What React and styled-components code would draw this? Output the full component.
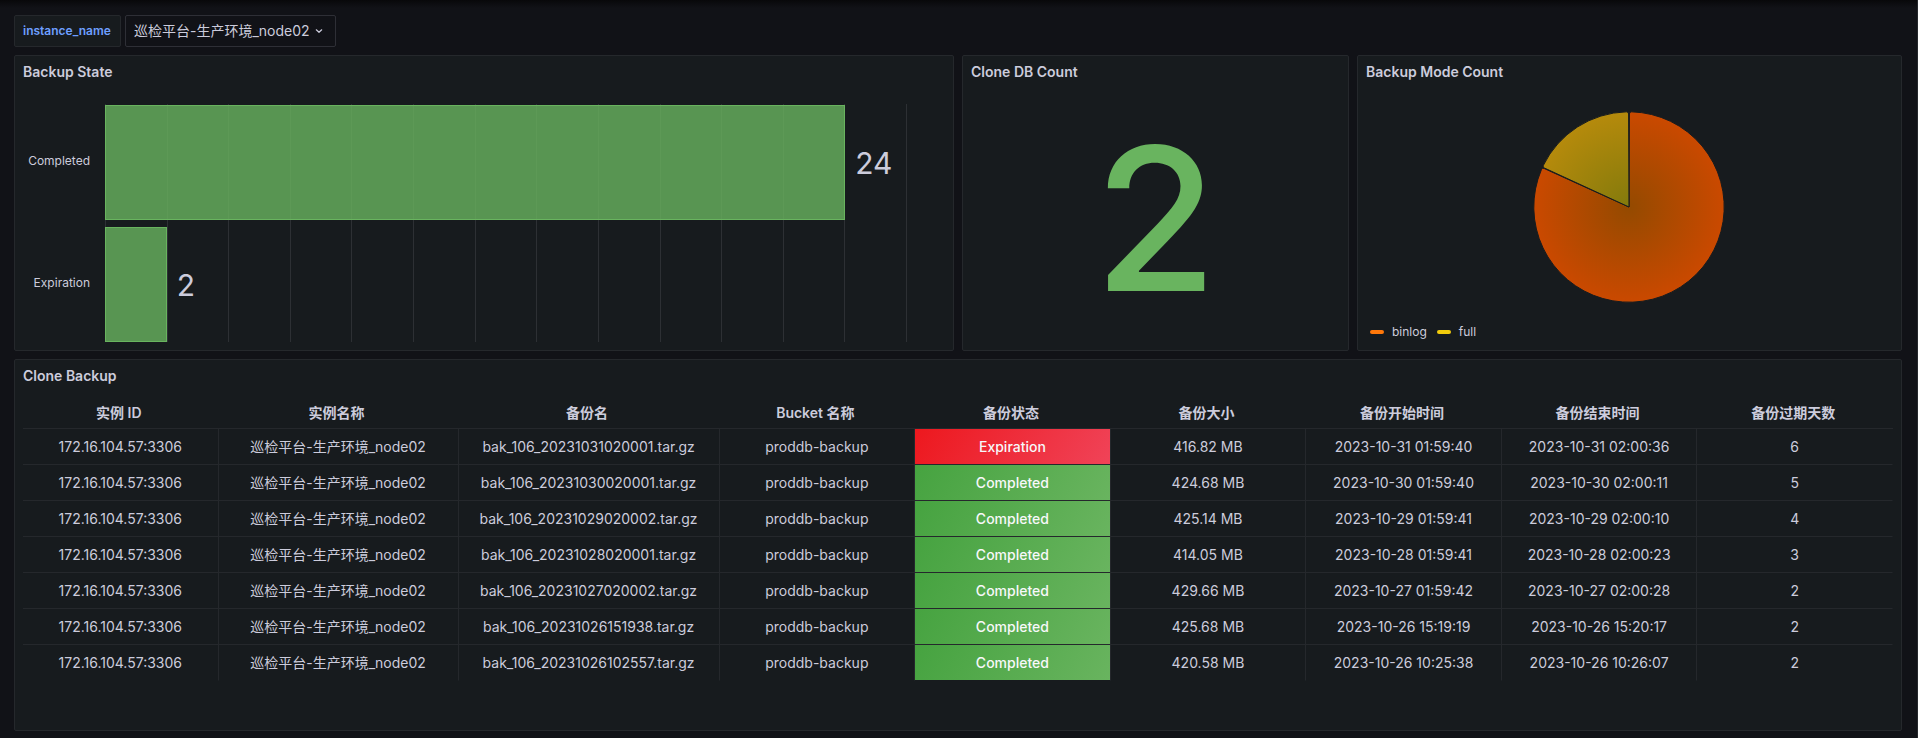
import React from 'react';
import styled, { createGlobalStyle } from 'styled-components';

const color = {
  page: '#111217',
  panel: '#171b1e',
  line: '#25282c',
  text: '#ccccdc',
  green: '#69b45f',
};

const GlobalStyle = createGlobalStyle`
  *, *::before, *::after { box-sizing: border-box; }
  body {
    margin: 0;
    background: ${color.page};
    color: ${color.text};
    font: 400 14px/22px Inter, "Noto Sans CJK SC", sans-serif;
    -webkit-font-smoothing: antialiased;
  }
`;

const Page = styled.main`
  min-height: 100vh;
  padding: 15px 15px 7px 14px;
  border-right: 1px solid ${color.line};
  background: linear-gradient(#08080a, ${color.page} 8px);
`;

const Toolbar = styled.form`
  display: flex;
  gap: 4px;
  margin-bottom: 8px;
`;

const VariableLabel = styled.label`
  display: flex;
  align-items: center;
  min-width: 107px;
  height: 32px;
  padding: 0 8px;
  border: 1px solid ${color.line};
  border-radius: 2px;
  background: ${color.panel};
  color: #6e9fff;
  font-size: 12px;
  font-weight: 600;
`;

const SelectBox = styled.div`
  display: grid;
  align-items: center;
  height: 32px;
  border: 1px solid #2e2f36;
  border-radius: 2px;

  > * { grid-area: 1 / 1; }

  svg {
    justify-self: end;
    margin-right: 8px;
    pointer-events: none;
  }
`;

const Select = styled.select`
  appearance: none;
  height: 30px;
  padding: 0 24px 0 8px;
  border: 0;
  background: transparent;
  color: inherit;
  font: inherit;
`;

const Dashboard = styled.div`
  display: grid;
  grid-template-columns: repeat(24, minmax(0, 1fr));
  grid-template-rows: 296px minmax(372px, auto);
  gap: 8px;
`;

const PanelFrame = styled.section`
  grid-column: span ${(p) => p.$span};
  display: flex;
  flex-direction: column;
  min-width: 0;
  border: 1px solid ${color.line};
  border-radius: 2px;
  background: ${color.panel};
`;

const PanelTitle = styled.h2`
  margin: 0;
  padding: 0 8px;
  font-size: 14px;
  font-weight: 600;
  line-height: 32px;
`;

const PanelBody = styled.div`
  flex: 1;
  display: flex;
  flex-direction: column;
  min-height: 0;
  padding: 8px;
`;

const BarChart = styled.div`
  flex: 1;
  display: grid;
  grid-template-columns: 82px 1fr;
  padding: 8px 38px 0 0;
`;

const BarLabels = styled.div`
  display: grid;
  grid-template-rows: 1fr 1fr;
  gap: 7px;
  align-items: center;
  padding: 0 15px 2px 0;
  font-size: 12px;
  text-align: right;
`;

const Plot = styled.div`
  display: grid;

  > * { grid-area: 1 / 1; }
`;

const GridLines = styled.div`
  display: grid;
  grid-template-columns: repeat(13, 1fr);
  border-left: 1px solid #2d3034;

  span { border-right: 1px solid #2d3034; }
`;

const Bars = styled.div`
  display: grid;
  grid-template-rows: 1fr 1fr;
  gap: 7px;
  padding-top: 1px;
`;

const BarRow = styled.div`
  display: flex;
  align-items: center;
  gap: 10px;
  font-size: 30px;
  line-height: 40px;
`;

const Bar = styled.div`
  align-self: stretch;
  border: 1px solid ${color.green};
  background: rgba(105, 180, 95, 0.8);
`;

const BigValue = styled.div`
  flex: 1;
  display: flex;
  align-items: center;
  justify-content: center;
  padding-bottom: 2px;
  color: ${color.green};
  font-size: 200px;
  font-weight: 500;
  line-height: 240px;
`;

const PieArea = styled.div`
  display: flex;
  justify-content: center;
  padding: 14px 0 12px;
`;

const Legend = styled.ul`
  display: flex;
  gap: 10px;
  margin: 0;
  padding: 7px 4px 0;
  list-style: none;
  font-size: 12px;
  line-height: 18px;
`;

const LegendItem = styled.li`
  display: flex;
  align-items: center;
  gap: 8px;

  &::before {
    content: '';
    width: 14px;
    height: 4px;
    border-radius: 2px;
    background: ${(p) => p.$color};
  }
`;

const Table = styled.table`
  width: 100%;
  table-layout: fixed;
  border-collapse: separate;
  border-spacing: 0;
  text-align: center;
`;

const HeadCell = styled.th`
  height: 29px;
  padding: 2px 8px 4px 4px;
  border-bottom: 1px solid ${color.line};
  font-weight: 600;
`;

const Cell = styled.td`
  height: 36px;
  padding: 0;
  border-right: 1px solid ${color.line};
  border-bottom: 1px solid ${color.line};
  white-space: nowrap;

  &:last-child { border-right-color: transparent; }
  tr:last-child > & { border-bottom-color: transparent; }
`;

const StatusCell = styled(Cell)`
  background: ${(p) =>
    p.$expired
      ? 'linear-gradient(120deg, #ed181e, #f04358)'
      : 'linear-gradient(120deg, #46a340, #69b45f)'} padding-box;
  color: #f7f8fa;
  font-weight: 500;
`;

const backupStates = [
  { name: 'Completed', value: 24 },
  { name: 'Expiration', value: 2 },
];

const columns = ['实例 ID', '实例名称', '备份名', 'Bucket 名称', '备份状态', '备份大小', '备份开始时间', '备份结束时间', '备份过期天数'];

const backups = [
  ['20231031020001', 'Expiration', '416.82 MB', '2023-10-31 01:59:40', '2023-10-31 02:00:36', 6],
  ['20231030020001', 'Completed', '424.68 MB', '2023-10-30 01:59:40', '2023-10-30 02:00:11', 5],
  ['20231029020002', 'Completed', '425.14 MB', '2023-10-29 01:59:41', '2023-10-29 02:00:10', 4],
  ['20231028020001', 'Completed', '414.05 MB', '2023-10-28 01:59:41', '2023-10-28 02:00:23', 3],
  ['20231027020002', 'Completed', '429.66 MB', '2023-10-27 01:59:42', '2023-10-27 02:00:28', 2],
  ['20231026151938', 'Completed', '425.68 MB', '2023-10-26 15:19:19', '2023-10-26 15:20:17', 2],
  ['20231026102557', 'Completed', '420.58 MB', '2023-10-26 10:25:38', '2023-10-26 10:26:07', 2],
];

const AXIS_MAX = 26;

function Panel({ title, span, children }) {
  return (
    <PanelFrame $span={span}>
      <PanelTitle>{title}</PanelTitle>
      <PanelBody>{children}</PanelBody>
    </PanelFrame>
  );
}

function BackupStateChart() {
  return (
    <BarChart>
      <BarLabels>
        {backupStates.map((s) => <span key={s.name}>{s.name}</span>)}
      </BarLabels>
      <Plot>
        <GridLines>
          {Array.from({ length: 13 }, (_, i) => <span key={i} />)}
        </GridLines>
        <Bars>
          {backupStates.map((s) => (
            <BarRow key={s.name}>
              <Bar style={{ width: `${(s.value / AXIS_MAX) * 100}%` }} />
              <span>{s.value}</span>
            </BarRow>
          ))}
        </Bars>
      </Plot>
    </BarChart>
  );
}

function ModePie() {
  return (
    <PieArea>
      <svg width="195" height="194" viewBox="-97 -97 195 194" role="img" aria-label="Backup mode share">
        <defs>
          <radialGradient id="binlog" gradientUnits="userSpaceOnUse" cx="0" cy="0" r="95">
            <stop offset="0" stopColor="#944a00" />
            <stop offset="1" stopColor="#ca4900" />
          </radialGradient>
          <radialGradient id="full" gradientUnits="userSpaceOnUse" cx="0" cy="0" r="95">
            <stop offset="0" stopColor="#837a0c" />
            <stop offset="1" stopColor="#b58a0c" />
          </radialGradient>
        </defs>
        <g stroke={color.panel} strokeWidth="1" strokeLinejoin="round">
          <path fill="url(#binlog)" d="M0 0 L.4 -93 Q.4 -95.200 2.600 -95.160 A95.200 95.200 0 1 1 -87.600 -37.300 Q-86.700 -39.800 -84.600 -38.400 Z" />
          <path fill="url(#full)" d="M0 0 L-84.600 -39 Q-86.600 -39.900 -85.600 -41.700 A95.200 95.200 0 0 1 -2.600 -95.160 Q-.4 -95.200 -.4 -93 Z" />
        </g>
      </svg>
    </PieArea>
  );
}

export default function App() {
  return (
    <>
      <GlobalStyle />
      <Page>
        <Toolbar>
          <VariableLabel htmlFor="instance">instance_name</VariableLabel>
          <SelectBox>
            <Select id="instance">
              <option>巡检平台-生产环境_node02</option>
            </Select>
            <svg width="16" height="16" viewBox="0 0 16 16" fill="none" stroke={color.text} strokeWidth="1.2" strokeLinecap="round" strokeLinejoin="round">
              <path d="M5.300 6.800 8 9.300 10.700 6.800" />
            </svg>
          </SelectBox>
        </Toolbar>
        <Dashboard>
          <Panel title="Backup State" span={12}>
            <BackupStateChart />
          </Panel>
          <Panel title="Clone DB Count" span={5}>
            <BigValue>2</BigValue>
          </Panel>
          <Panel title="Backup Mode Count" span={7}>
            <ModePie />
            <Legend>
              <LegendItem $color="#ff780a">binlog</LegendItem>
              <LegendItem $color="#f2cc0c">full</LegendItem>
            </Legend>
          </Panel>
          <Panel title="Clone Backup" span={24}>
            <Table>
              <colgroup>
                <col />
                <col style={{ width: 240 }} />
                <col style={{ width: 261 }} />
                <col span={6} />
              </colgroup>
              <thead>
                <tr>{columns.map((c) => <HeadCell key={c} scope="col">{c}</HeadCell>)}</tr>
              </thead>
              <tbody>
                {backups.map(([stamp, status, size, start, end, days]) => (
                  <tr key={stamp}>
                    <Cell>172.16.104.57:3306</Cell>
                    <Cell>巡检平台-生产环境_node02</Cell>
                    <Cell>{`bak_106_${stamp}.tar.gz`}</Cell>
                    <Cell>proddb-backup</Cell>
                    <StatusCell $expired={status === 'Expiration'}>{status}</StatusCell>
                    <Cell>{size}</Cell>
                    <Cell>{start}</Cell>
                    <Cell>{end}</Cell>
                    <Cell>{days}</Cell>
                  </tr>
                ))}
              </tbody>
            </Table>
          </Panel>
        </Dashboard>
      </Page>
    </>
  );
}
